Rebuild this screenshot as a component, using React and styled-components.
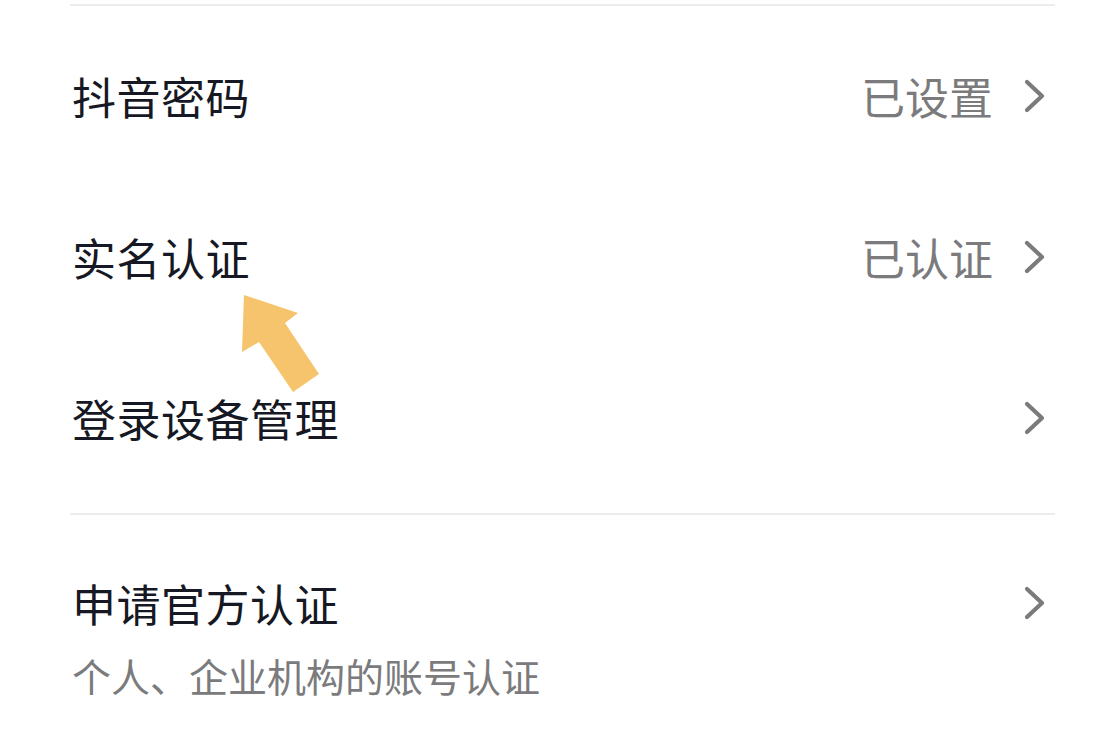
import React from "react";
import styled, { createGlobalStyle } from "styled-components";

const GlobalStyle = createGlobalStyle`
  html, body {
    margin: 0;
    padding: 0;
    background: #ffffff;
  }
  body {
    font-family: "Noto Sans CJK SC", "Noto Sans", sans-serif;
    -webkit-font-smoothing: antialiased;
  }
`;

const TEXT = "#161823";
const GREY = "#7b7b7d";
const LINE = "#ececec";

const Page = styled.div`
  position: relative;
  width: 1118px;
  height: 745px;
  overflow: hidden;
  background: #fff;
  padding: 4px 63px 0 70px;
  box-sizing: border-box;
`;

const Divider = styled.div`
  height: 2px;
  background: ${LINE};
`;

const Section = styled.div`
  display: flex;
  flex-direction: column;
  padding: 9px 0 15px;
`;

const Row = styled.div`
  display: flex;
  align-items: center;
  justify-content: space-between;
  height: 161px;
  padding-left: 2px;
`;

const Title = styled.span`
  font-size: 44px;
  line-height: 60px;
  color: ${TEXT};
  letter-spacing: 0.5px;
`;

const Right = styled.div`
  display: flex;
  align-items: center;
  gap: 30px;
`;

const Value = styled.span`
  font-size: 44px;
  line-height: 60px;
  color: ${GREY};
`;

const ApplyItem = styled.div`
  display: flex;
  align-items: flex-start;
  justify-content: space-between;
  padding: 58px 0 0 2px;
`;

const ApplyText = styled.div`
  display: flex;
  flex-direction: column;
  gap: 16px;
`;

const Sub = styled.span`
  font-size: 39px;
  line-height: 52px;
  color: ${GREY};
`;

const ChevronBox = styled.div`
  display: flex;
  align-items: center;
  justify-content: center;
  width: 24px;
  height: 60px;
  margin-right: 8px;
`;

const Pointer = styled.svg`
  position: absolute;
  left: 236px;
  top: 288px;
`;

const Chevron = () => (
  <ChevronBox>
    <svg width="24" height="34" viewBox="0 0 24 34">
      <path
        d="M4 3 L19 17 L4 31"
        fill="none"
        stroke={GREY}
        strokeWidth="4.2"
        strokeLinecap="round"
        strokeLinejoin="round"
      />
    </svg>
  </ChevronBox>
);

const rows = [
  { title: "抖音密码", value: "已设置" },
  { title: "实名认证", value: "已认证" },
  { title: "登录设备管理", value: "" },
];

export default function App() {
  return (
    <>
      <GlobalStyle />
      <Page>
        <Divider />
        <Section>
          {rows.map((r) => (
            <Row key={r.title}>
              <Title>{r.title}</Title>
              <Right>
                {r.value && <Value>{r.value}</Value>}
                <Chevron />
              </Right>
            </Row>
          ))}
        </Section>
        <Divider />
        <ApplyItem>
          <ApplyText>
            <Title>申请官方认证</Title>
            <Sub>个人、企业机构的账号认证</Sub>
          </ApplyText>
          <Chevron />
        </ApplyItem>
        <Pointer width="90" height="110" viewBox="0 0 90 110">
          <polygon
            points="8,7 62,25 49,35 83,86 57,104 23,54 6,64"
            fill="#f5c46c"
          />
        </Pointer>
      </Page>
    </>
  );
}
